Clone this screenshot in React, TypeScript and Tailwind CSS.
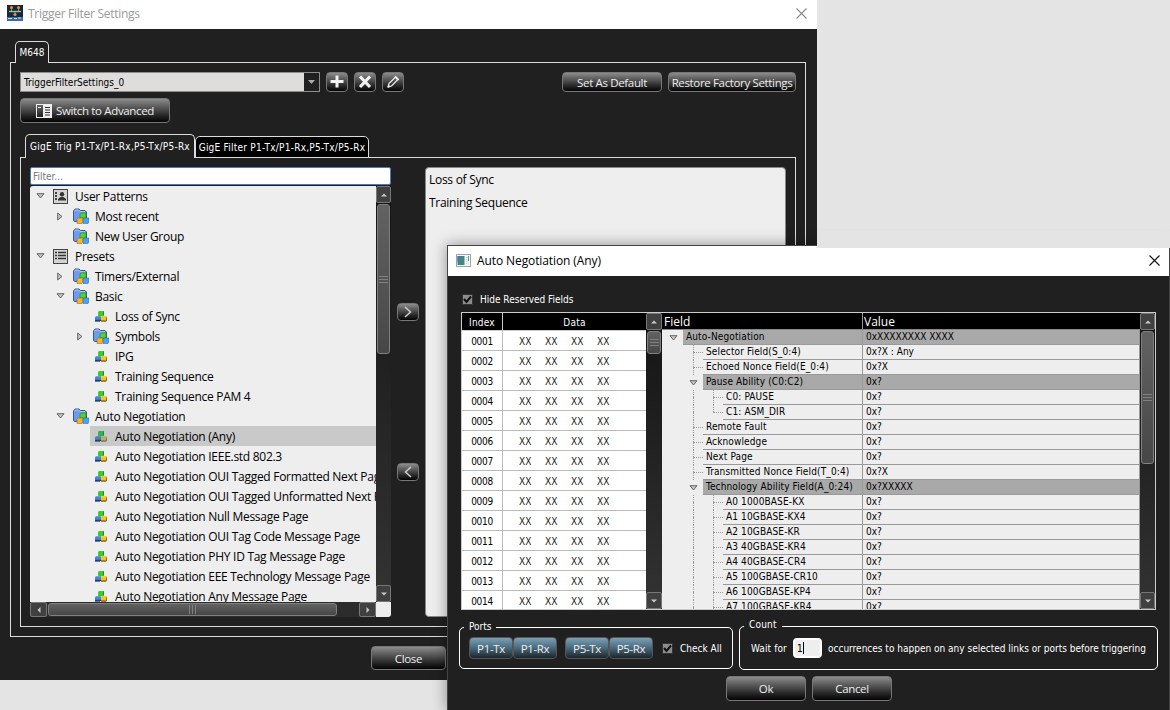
import React from "react";
import clsx from "clsx";

type TreeItem = {
  label: string;
  level: 1 | 2 | 3;
  icon: "user" | "list" | "folder" | "cubes";
  arrow?: "open" | "closed";
  selected?: boolean;
};

const patterns: TreeItem[] = [
  { label: "User Patterns", level: 1, icon: "user", arrow: "open" },
  { label: "Most recent", level: 2, icon: "folder", arrow: "closed" },
  { label: "New User Group", level: 2, icon: "folder" },
  { label: "Presets", level: 1, icon: "list", arrow: "open" },
  { label: "Timers/External", level: 2, icon: "folder", arrow: "closed" },
  { label: "Basic", level: 2, icon: "folder", arrow: "open" },
  { label: "Loss of Sync", level: 3, icon: "cubes" },
  { label: "Symbols", level: 3, icon: "folder", arrow: "closed" },
  { label: "IPG", level: 3, icon: "cubes" },
  { label: "Training Sequence", level: 3, icon: "cubes" },
  { label: "Training Sequence PAM 4", level: 3, icon: "cubes" },
  { label: "Auto Negotiation", level: 2, icon: "folder", arrow: "open" },
  { label: "Auto Negotiation (Any)", level: 3, icon: "cubes", selected: true },
  { label: "Auto Negotiation IEEE.std 802.3", level: 3, icon: "cubes" },
  { label: "Auto Negotiation OUI Tagged Formatted Next Page", level: 3, icon: "cubes" },
  { label: "Auto Negotiation OUI Tagged Unformatted Next Page", level: 3, icon: "cubes" },
  { label: "Auto Negotiation Null Message Page", level: 3, icon: "cubes" },
  { label: "Auto Negotiation OUI Tag Code Message Page", level: 3, icon: "cubes" },
  { label: "Auto Negotiation PHY ID Tag Message Page", level: 3, icon: "cubes" },
  { label: "Auto Negotiation EEE Technology Message Page", level: 3, icon: "cubes" },
  { label: "Auto Negotiation Any Message Page", level: 3, icon: "cubes" },
];

type FieldItem = {
  name: string;
  value: string;
  level: 1 | 2 | 3;
  group?: boolean;
  last?: boolean;
};

const fields: FieldItem[] = [
  { name: "Auto-Negotiation", value: "0xXXXXXXXX XXXX", level: 1, group: true },
  { name: "Selector Field(S_0:4)", value: "0x?X : Any", level: 2 },
  { name: "Echoed Nonce Field(E_0:4)", value: "0x?X", level: 2 },
  { name: "Pause Ability (C0:C2)", value: "0x?", level: 2, group: true },
  { name: "C0: PAUSE", value: "0x?", level: 3 },
  { name: "C1: ASM_DIR", value: "0x?", level: 3, last: true },
  { name: "Remote Fault", value: "0x?", level: 2 },
  { name: "Acknowledge", value: "0x?", level: 2 },
  { name: "Next Page", value: "0x?", level: 2 },
  { name: "Transmitted Nonce Field(T_0:4)", value: "0x?X", level: 2 },
  { name: "Technology Ability Field(A_0:24)", value: "0x?XXXXX", level: 2, group: true },
  { name: "A0 1000BASE-KX", value: "0x?", level: 3 },
  { name: "A1 10GBASE-KX4", value: "0x?", level: 3 },
  { name: "A2 10GBASE-KR", value: "0x?", level: 3 },
  { name: "A3 40GBASE-KR4", value: "0x?", level: 3 },
  { name: "A4 40GBASE-CR4", value: "0x?", level: 3 },
  { name: "A5 100GBASE-CR10", value: "0x?", level: 3 },
  { name: "A6 100GBASE-KP4", value: "0x?", level: 3 },
  { name: "A7 100GBASE-KR4", value: "0x?", level: 3 },
];

const indexes = Array.from({ length: 14 }, (_, i) => String(i + 1).padStart(4, "0"));

const openSans = "font-['Open_Sans','Noto_Sans',sans-serif] [font-stretch:normal]";
const segoe = `${openSans} text-[12px] tracking-[-0.28px]`;
const segoeTitle = `${openSans} text-[12px]`;
const segoeButton = `${openSans} text-[11.5px] tracking-[-0.35px]`;
const tahoma = "font-['DejaVu_Sans_Condensed','DejaVu_Sans',sans-serif] [font-stretch:condensed] text-[10px]";

const AppLogo = () => (
  <svg width="16" height="16" viewBox="0 0 16 16">
    <rect width="16" height="16" fill="#1b2733" />
    <path d="M0 12h16v4H0z" fill="#3a6ea5" />
    <path d="M4.500 3v3M11.500 3v3M8 6v3" stroke="#c8793c" strokeWidth="1" />
    <path d="M2 6.500h12" stroke="#6fd0d8" strokeWidth="1.400" />
    <circle cx="4.500" cy="2.500" r="1.500" fill="#f08a3c" />
    <circle cx="11.500" cy="2.500" r="1.500" fill="#f08a3c" />
    <circle cx="8" cy="9.500" r="1.600" fill="#f08a3c" />
    <path d="M1 13.500h4M7 13.500h3M11 13h3" stroke="#c9dcee" />
  </svg>
);

const DialogLogo = () => (
  <svg width="15" height="13" viewBox="0 0 15 13">
    <rect x="0.500" y="0.500" width="14" height="12" fill="#f3f5f6" stroke="#9aa5b0" />
    <rect x="1.500" y="2" width="7" height="9" fill="#3f8a80" />
    <path d="M1.500 2h4l-4 6z" fill="#4a78a8" />
    <path d="M10 3.500h1.500M10 5.500h1.500M10 7.500h1.500M10 9.500h1.500" stroke="#c9cfd2" />
    <path d="M12.500 2v5" stroke="#59a08c" />
  </svg>
);

const CloseX = ({ color }: { color: string }) => (
  <svg width="11" height="11" viewBox="0 0 11 11">
    <path d="M.5.5l10 10M10.500.5l-10 10" stroke={color} strokeWidth="1.100" />
  </svg>
);

const FolderIcon = () => (
  <svg width="16" height="16" viewBox="0 0 16 16">
    <path d="M.5 12.500V3L2 1h4l1.500 1.500H12L13.500 4v8.500L12 13.500H2z" fill="#6c9cf0" stroke="#40557e" />
    <path d="M1.500 3.500L2.500 2h3L7 3.500h5" fill="none" stroke="#a9c8fa" />
    <path d="M7 6l1-1h5v4.500L12 10H7z" fill="#4fd82c" stroke="#2b7d28" strokeWidth=".6" />
    <path d="M4 11l1-1h5v4.500L9 15.500H4z" fill="#f9b51c" stroke="#75602a" strokeWidth=".5" />
    <path d="M10 11l1-1h5v4.500l-1 1h-5z" fill="#45a4f8" stroke="#335b94" strokeWidth=".5" />
  </svg>
);

const CubesIcon = ({ dim }: { dim?: boolean }) => (
  <svg width="12" height="11" viewBox="0 0 12 11">
    <path d="M3 1l1-1h5v4l-1 1.200H3z" fill={dim ? "#2fb05a" : "#3ccc2a"} />
    <path d="M8 1l1-1v4L8 5.200z" fill="#1e8a35" />
    <path d="M0 6.200l1-1h5v4l-1 1.200H0z" fill={dim ? "#4b80b0" : "#4a86d0"} />
    <path d="M0 8.800h6v.5l-1 1.200H0z" fill="#28406c" />
    <path d="M6 6.200l1-1h5v4l-1 1.200H6z" fill={dim ? "#b8b060" : "#f4c51c"} />
    <path d="M6 9.300h5V7l1-1v3.500l-1 1.200H6z" fill={dim ? "#7d7c50" : "#8a6a24"} />
  </svg>
);

const UserIcon = () => (
  <svg width="15" height="15" viewBox="0 0 15 15">
    <rect x=".5" y=".5" width="14" height="14" fill="#d4d4d4" stroke="#444" />
    <path d="M2 3h2v2H2zM2 6h2v2H2zM2 9h2v2H2z" fill="#444" />
    <circle cx="9" cy="5.200" r="2.200" fill="#333" />
    <path d="M5 11.500V10l2.500-2h3L13 10v1.500z" fill="#333" />
  </svg>
);

const ListIcon = () => (
  <svg width="15" height="15" viewBox="0 0 15 15">
    <rect x=".5" y=".5" width="14" height="14" fill="#d4d4d4" stroke="#444" />
    <path d="M2 3.500h2M5 3.500h8M2 6.500h2M5 6.500h8M2 9.500h2M5 9.500h8" stroke="#333" strokeWidth="1.600" />
  </svg>
);

const OpenArrow = () => (
  <svg width="9" height="6" viewBox="0 0 9 6">
    <path d="M1 .7h7L4.500 5z" fill="#c4c4c4" stroke="#666" />
  </svg>
);

const ClosedArrow = () => (
  <svg width="6" height="9" viewBox="0 0 6 9">
    <path d="M.7 1v7L5 4.500z" fill="#c4c4c4" stroke="#666" />
  </svg>
);

const arrowPaths = {
  up: "M1 5.500h6L4 2.500z",
  down: "M1 2.500h6L4 5.500z",
  left: "M5.500 1v6L2.500 4z",
  right: "M2.500 1v6L5.500 4z",
};

const ScrollButton = ({ dir, className }: { dir: keyof typeof arrowPaths; className?: string }) => (
  <div
    className={clsx(
      "flex shrink-0 items-center justify-center rounded-xs border border-[#777] bg-[#404040]",
      className
    )}
  >
    <svg width="8" height="8" viewBox="0 0 8 8">
      <path d={arrowPaths[dir]} fill="#c8c8c8" />
    </svg>
  </div>
);

const Grip = ({ vertical }: { vertical?: boolean }) => (
  <div className={clsx("flex gap-[2px]", vertical ? "flex-row" : "flex-col")}>
    {[0, 1, 2].map((i) => (
      <span key={i} className={clsx("bg-[#808080]", vertical ? "h-[9px] w-px" : "h-px w-[9px]")} />
    ))}
  </div>
);

const VScroll = ({ thumb, className }: { thumb: string; className: string }) => (
  <div className={clsx("flex shrink-0 flex-col bg-linear-to-b from-[#141414] to-[#333]", className)}>
    <ScrollButton dir="up" className="h-[17px]" />
    <div
      className={clsx(
        "mx-px mt-px flex items-center justify-center rounded-[3px] border border-[#808080] bg-linear-to-b from-[#626262] to-[#474747]",
        thumb
      )}
    >
      <Grip />
    </div>
    <ScrollButton dir="down" className="mt-auto h-[17px]" />
  </div>
);

const Button = ({ className, children }: { className?: string; children: React.ReactNode }) => (
  <button
    className={clsx(
      "flex shrink-0 items-center justify-center whitespace-nowrap rounded-[4px] border border-[#777] bg-linear-to-b from-[#8c8c8c] via-[#454545] to-[#050505] text-[#eee]",
      className
    )}
  >
    {children}
  </button>
);

const PortButton = ({ label }: { label: string }) => (
  <button
    className={clsx(
      segoeButton,
      "h-[22px] w-[44px] rounded-[4px] border border-[#555] bg-linear-to-b from-[#7ba0b6] via-[#4a6a7c] to-[#1c262b] text-center leading-[22px] text-[#eee]"
    )}
  >
    {label}
  </button>
);

const Checkbox = ({ label }: { label: string }) => (
  <label className={clsx(tahoma, "flex h-[12px] items-center text-white")}>
    <span className="mr-[7px] flex h-[11px] w-[11px] items-center justify-center border border-[#333] bg-[#8c8c8c]">
      <svg width="9" height="9" viewBox="0 0 9 9">
        <path d="M1 4l2.500 3L8 1.500" fill="none" stroke="#111" strokeWidth="2" />
      </svg>
    </span>
    {label}
  </label>
);

const PatternRow = ({ item }: { item: TreeItem }) => (
  <li
    className={clsx(
      "flex h-[20px] shrink-0 items-center",
      item.level === 2 && "pl-[20px]",
      item.level === 3 && "pl-[40px]"
    )}
  >
    <span className="flex w-[20px] shrink-0 items-center justify-center">
      {item.arrow === "open" && <OpenArrow />}
      {item.arrow === "closed" && <ClosedArrow />}
    </span>
    <div className={clsx("flex h-full flex-1 items-center", item.selected && "bg-[#c9c9c9]")}>
      <span className={clsx("flex w-[25px] shrink-0", item.icon === "cubes" ? "pl-[5px]" : "pl-[3px]")}>
        {item.icon === "user" && <UserIcon />}
        {item.icon === "list" && <ListIcon />}
        {item.icon === "folder" && <FolderIcon />}
        {item.icon === "cubes" && <CubesIcon dim={item.selected} />}
      </span>
      <span className="whitespace-nowrap pt-[2px]">{item.label}</span>
    </div>
  </li>
);

const Guide = ({ line, tick, last }: { line?: boolean; tick?: boolean; last?: boolean }) => (
  <span className="flex h-full w-[20px] shrink-0 justify-end">
    <span className="flex h-full w-[10px] flex-col">
      <span className={clsx("h-[7px] border-[#999]", line && "border-l border-dotted")} />
      <span
        className={clsx(
          "flex-1 border-[#999]",
          line && !last && "border-l border-dotted",
          tick && "border-t border-dotted"
        )}
      />
    </span>
  </span>
);

const FieldRow = ({ item, done }: { item: FieldItem; done?: boolean }) => (
  <div className="flex h-[15px] shrink-0">
    <div className="flex w-[201px] shrink-0 pl-px">
      {item.level > 1 && item.group && <Guide />}
      {item.level === 2 && !item.group && (
        <>
          <Guide />
          <Guide line tick />
        </>
      )}
      {item.level === 3 && (
        <>
          <Guide />
          <Guide line={!done} />
          <Guide line tick last={item.last} />
        </>
      )}
      {item.group && (
        <span className="flex w-[20px] shrink-0 items-center justify-center">
          <OpenArrow />
        </span>
      )}
      <span
        className={clsx(
          "flex-1 whitespace-nowrap border-b border-r border-[#999] pl-[3px] leading-[14px] tracking-[0.13px]",
          item.group && "bg-[#a9a9a9]"
        )}
      >
        {item.name}
      </span>
    </div>
    <span
      className={clsx(
        "flex-1 border-b border-r border-[#999] pl-[3px] leading-[14px]",
        item.group && "bg-[#a9a9a9]"
      )}
    >
      {item.value}
    </span>
  </div>
);

const SettingsWindow = () => (
  <section className="absolute left-0 top-0 flex h-[680px] w-[817px] flex-col bg-[#202020]">
    <header className="flex h-[29px] shrink-0 items-center bg-white pb-[3px] pl-[7px] pr-[10px]">
      <AppLogo />
      <h1 className={clsx(segoe, "ml-[5px] flex-1 pt-[2px] text-[#999]")}>Trigger Filter Settings</h1>
      <CloseX color="#8a8a8a" />
    </header>

    <div className="flex flex-col px-[10px] pt-[12px]">
      <div className={clsx(tahoma, "z-10 -mb-px ml-[5px] h-[22px] w-[34px] rounded-t-[5px] border border-b-0 border-[#ddd] bg-[#202020] text-center leading-[22px] text-white")}>
        M648
      </div>
      <div className="flex h-[575px] w-[796px] flex-col border border-[#ddd] p-[9px]">
        <div className="flex h-[20px] gap-[6px]">
          <div className={clsx(tahoma, "flex w-[300px] border border-[#8c8c8c] bg-[#dedddc] text-black")}>
            <span className="flex-1 pl-[3px] leading-[20px]">TriggerFilterSettings_0</span>
            <span className="flex w-[15px] items-center justify-center bg-[#202020]">
              <svg width="7" height="4" viewBox="0 0 7 4">
                <path d="M0 0h7L3.500 4z" fill="#aaa" />
              </svg>
            </span>
          </div>
          <Button className="w-[22px]">
            <svg width="14" height="14" viewBox="0 0 14 14">
              <path d="M7 .5v12M.5 6.500h13" stroke="#f2f2f2" strokeWidth="3" />
            </svg>
          </Button>
          <Button className="w-[22px]">
            <svg width="14" height="14" viewBox="0 0 14 14">
              <path d="M2 1.500l10 10.500M12 1.500L2 12" stroke="#f2f2f2" strokeWidth="3.200" />
            </svg>
          </Button>
          <Button className="w-[22px]">
            <svg width="14" height="14" viewBox="0 0 14 14">
              <path d="M2 12l1-3.500L9.500 2l2.500 2.300L5.500 11z" fill="none" stroke="#f2f2f2" strokeWidth="1.200" />
              <path d="M9 1.500L12.500 5M2 12l2-1" stroke="#f2f2f2" strokeWidth="1.800" />
            </svg>
          </Button>
          <Button className={clsx(segoeButton, "ml-auto w-[100px] pt-[2px]")}>Set As Default</Button>
          <Button className={clsx(segoeButton, "w-[128px] pt-[2px]")}>Restore Factory Settings</Button>
        </div>

        <Button className={clsx(segoeButton, "mt-[6px] h-[25px] w-[150px] gap-[4px]")}>
          <svg width="16" height="14" viewBox="0 0 16 14">
            <rect x=".5" y=".5" width="15" height="13" fill="none" stroke="#eee" />
            <path d="M7 0h9v14H7z" fill="#eee" />
            <path d="M9 3.500h5M9 6h5M9 8.500h5M9 11h5" stroke="#333" />
            <path d="M2 3.500h3" stroke="#eee" />
          </svg>
          <span className="pt-px">Switch to Advanced</span>
        </Button>

        <div className={clsx(tahoma, "z-10 -mb-px mt-[11px] flex h-[24px] shrink-0 items-end pl-[5px] tracking-[0.24px] text-white")}>
          <div className="h-[24px] w-[170px] whitespace-nowrap rounded-t-[5px] border border-b-0 border-[#ddd] bg-[#202020] text-center leading-[23px]">
            GigE Trig P1-Tx/P1-Rx,P5-Tx/P5-Rx
          </div>
          <div className="h-[22px] w-[174px] whitespace-nowrap rounded-t-[5px] border border-[#ddd] bg-black text-center leading-[22px]">
            GigE Filter P1-Tx/P1-Rx,P5-Tx/P5-Rx
          </div>
        </div>

        <div className="flex h-[470px] shrink-0 border border-[#ddd] p-[9px]">
          <div className="flex w-[361px] flex-col">
            <div className={clsx(tahoma, "h-[18px] rounded-xs border border-[#4d78bd] bg-white pl-[2px] leading-[18px] text-[#777]")}>
              Filter...
            </div>
            <div className="mt-px flex h-[431px] flex-col rounded-[3px] bg-[#eee]">
              <div className="flex h-[416px]">
                <ul className={clsx(segoe, "flex w-[346px] flex-col overflow-hidden text-black")}>
                  {patterns.map((item) => (
                    <PatternRow key={item.label} item={item} />
                  ))}
                </ul>
                <VScroll className="w-[15px]" thumb="h-[150px]" />
              </div>
              <div className="flex h-[15px] w-[346px] bg-[#2c2c2c]">
                <ScrollButton dir="left" className="w-[17px]" />
                <div className="my-px ml-px flex w-[289px] items-center justify-center rounded-[3px] border border-[#808080] bg-linear-to-b from-[#626262] to-[#474747]">
                  <Grip vertical />
                </div>
                <ScrollButton dir="right" className="ml-auto w-[17px]" />
              </div>
            </div>
          </div>

          <div className="flex w-[34px] flex-col items-center pt-[136px]">
            <Button className="h-[18px] w-[22px]">
              <svg width="8" height="12" viewBox="0 0 8 12">
                <path d="M1 1l5.500 5L1 11" fill="none" stroke="#ccc" strokeWidth="1.600" />
              </svg>
            </Button>
            <Button className="mt-[142px] h-[18px] w-[22px]">
              <svg width="8" height="12" viewBox="0 0 8 12">
                <path d="M7 1L1.500 6 7 11" fill="none" stroke="#ccc" strokeWidth="1.600" />
              </svg>
            </Button>
          </div>

          <ul className={clsx(segoe, "flex-1 rounded-[4px] border border-[#888] bg-[#eee] pl-[3px] text-black")}>
            <li className="h-[23px] leading-[23px]">Loss of Sync</li>
            <li className="h-[23px] leading-[23px]">Training Sequence</li>
          </ul>
        </div>
      </div>
    </div>

    <Button className={clsx(segoeButton, "ml-[371px] mt-[9px] h-[24px] w-[75px] pt-px")}>Close</Button>
  </section>
);

const NegotiationDialog = () => (
  <section className="absolute left-[447px] top-[245px] flex h-[465px] w-[723px] flex-col border-l border-r border-t border-[#444] bg-[#202020] shadow-[0_0_14px_rgba(0,0,0,0.4)]">
    <header className="flex h-[30px] shrink-0 items-center bg-white pb-px pl-[8px] pr-[9px]">
      <DialogLogo />
      <h2 className={clsx(segoeTitle, "ml-[6px] flex-1 pt-px tracking-[-0.1px] text-black")}>Auto Negotiation (Any)</h2>
      <CloseX color="#111" />
    </header>

    <div className="flex flex-col pl-[13px] pt-[17px]">
      <div className="pl-px">
        <Checkbox label="Hide Reserved Fields" />
      </div>

      <div className="mt-[7px] flex h-[298px] w-[695px] overflow-hidden border border-[#ccc] bg-[#eee]">
        <div className={clsx(tahoma, "flex w-[184px] shrink-0 flex-col bg-white text-black")}>
          <div className="flex h-[18px] shrink-0 border-b border-[#ccc] bg-black text-center leading-[20px] tracking-[0.2px] text-white">
            <span className="w-[41px] border-r border-[#ccc]">Index</span>
            <span className="flex-1">Data</span>
          </div>
          {indexes.map((index) => (
            <div key={index} className="flex h-[20px] shrink-0 border-b border-[#bbb] leading-[21px]">
              <span className="w-[41px] border-r border-[#bbb] text-center tracking-[-0.3px]">{index}</span>
              <span className="flex pl-[16px] text-[#222]">
                {[0, 1, 2, 3].map((n) => (
                  <span key={n} className="w-[26px]">XX</span>
                ))}
              </span>
            </div>
          ))}
        </div>
        <VScroll className="w-[16px]" thumb="h-[23px]" />
        <div className={clsx(tahoma, "flex min-w-0 flex-1 flex-col text-black")}>
          <div className={clsx(segoeTitle, "flex h-[17px] shrink-0 border-b border-[#888] bg-black leading-[17px] text-white")}>
            <span className="w-[201px] border-r border-[#999] pl-[2px]">Field</span>
            <span className="pl-px">Value</span>
          </div>
          {fields.map((item) => (
            <FieldRow key={item.name} item={item} />
          ))}
        </div>
        <VScroll className="w-[15px]" thumb="h-[133px]" />
      </div>
    </div>

    <div className={clsx(tahoma, "mt-[16px] flex items-center gap-[6px] pl-[11px] text-white")}>
      <div className="relative flex h-[42px] w-[274px] items-center rounded-[5px] border border-white pl-[9px]">
        <span className="absolute -top-[8px] left-[4px] bg-[#202020] px-[5px] leading-[14px]">Ports</span>
        <PortButton label="P1-Tx" />
        <PortButton label="P1-Rx" />
        <span className="w-[8px]" />
        <PortButton label="P5-Tx" />
        <PortButton label="P5-Rx" />
        <span className="w-[9px]" />
        <Checkbox label="Check All" />
      </div>
      <div className="relative flex h-[44px] w-[419px] items-center rounded-[5px] border border-white pl-[11px]">
        <span className="absolute -top-[9px] left-[4px] bg-[#202020] px-[5px] leading-[14px] tracking-[0.2px]">Count</span>
        <span className="w-[42px] whitespace-nowrap tracking-[0.1px]">Wait for</span>
        <span className="flex h-[20px] w-[29px] items-center rounded-[4px] border-2 border-white bg-[#eee] pl-[2px] text-black">
          1<span className="h-[12px] w-px bg-black" />
        </span>
        <span className="ml-[6px] whitespace-nowrap">
          occurrences to happen on any selected links or ports before triggering
        </span>
      </div>
    </div>

    <div className="mt-[6px] flex gap-[6px] pl-[278px]">
      <Button className={clsx(segoeButton, "h-[25px] w-[80px]")}>Ok</Button>
      <Button className={clsx(segoeButton, "h-[25px] w-[80px]")}>Cancel</Button>
    </div>

    {/* desktop strip that hides the dialog's top edge right of the main window */}
    <div className="absolute -right-px -top-[15px] h-[17px] w-[353px] bg-[#e3e4e3]" />
  </section>
);

const App: React.FC = () => {
  return (
    <main className="relative h-screen w-full overflow-hidden bg-[#e3e4e3]">
      <SettingsWindow />
      <NegotiationDialog />
    </main>
  );
};

export default App;
